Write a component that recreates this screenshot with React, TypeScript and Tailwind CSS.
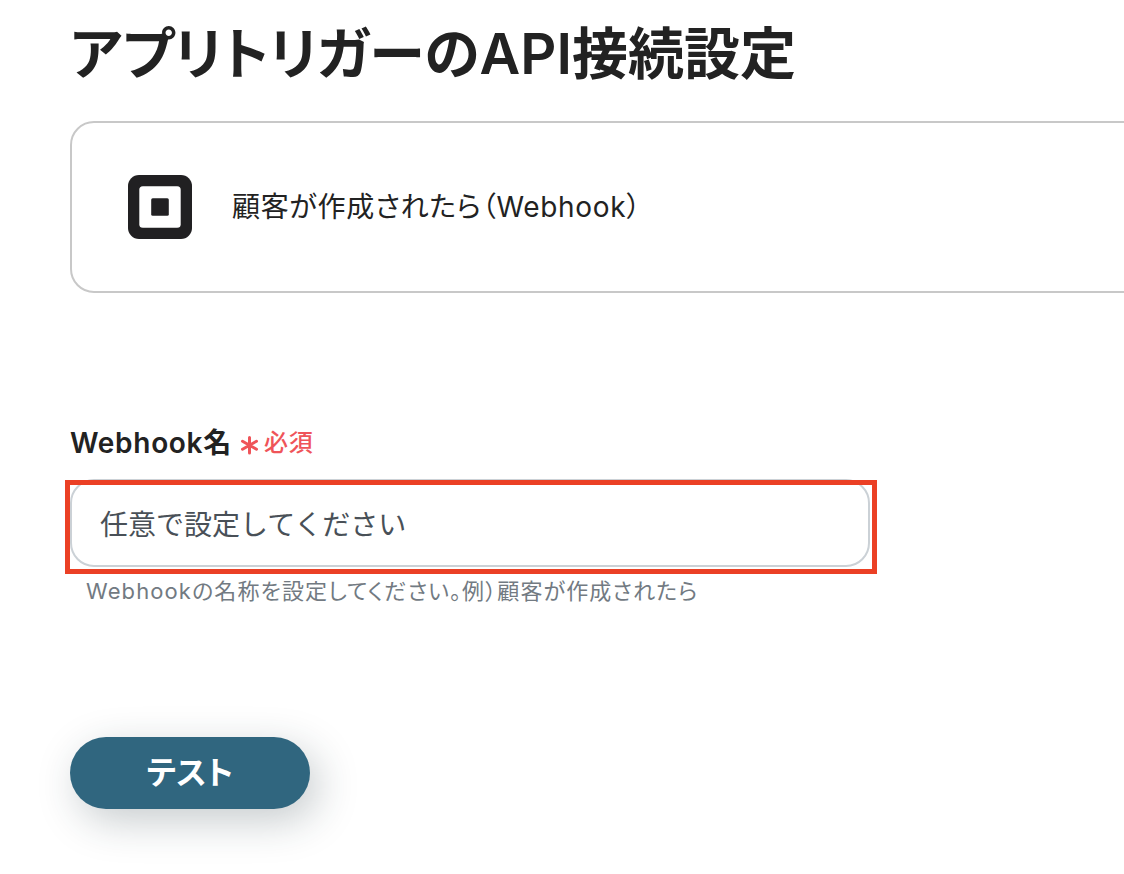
import { useState } from "react";

function AppLogo() {
  return (
    <svg className="h-16 w-16 shrink-0" viewBox="0 0 64 64" aria-hidden="true">
      <rect width="64" height="64" rx="11" fill="#212022" />
      <rect x="11.3" y="11.3" width="41.4" height="41.4" rx="3.5" fill="#fff" />
      <rect x="23.2" y="23.2" width="17.6" height="17.6" rx="1.5" fill="#212022" />
    </svg>
  );
}

function RequiredMark() {
  return (
    <svg className="mt-1 h-5 w-5" viewBox="0 0 20 20" fill="none" stroke="#ef5459" strokeWidth="3" strokeLinecap="round" aria-hidden="true">
      <path d="M9.5 2.5v15.5M2.5 6.2l14 8M16.5 6.2l-14 8" />
    </svg>
  );
}

export default function App() {
  const [name, setName] = useState("");

  return (
    <main className="overflow-hidden bg-white pb-16 pl-[70px] font-['Inter','Noto_Sans_CJK_JP',sans-serif] text-[#222222] [font-feature-settings:'palt']">
      <h1 className="pt-[14px] text-[56px] leading-20 font-semibold whitespace-nowrap">アプリトリガーのAPI接続設定</h1>

      <section className="mt-[27px] -mr-8 flex h-[172px] items-center gap-10 rounded-3xl border-2 border-[#c8c8c8] pl-14">
        <AppLogo />
        <p className="text-[28px] leading-10 tracking-wide whitespace-nowrap">顧客が作成されたら（Webhook）</p>
      </section>

      <form className="mt-[130px]" onSubmit={(e) => e.preventDefault()}>
        <label htmlFor="webhook-name" className="flex items-center gap-2 text-[28px] leading-10 font-semibold tracking-wide">
          Webhook名
          <span className="flex items-center gap-1 text-2xl font-medium text-[#ef5459]">
            <RequiredMark />
            必須
          </span>
        </label>
        <div className="relative mt-4 max-w-[800px]">
          <input
            id="webhook-name"
            value={name}
            onChange={(e) => setName(e.target.value)}
            placeholder="任意で設定してください"
            className="block h-[88px] w-full rounded-3xl border-2 border-[#cbd1d6] px-7 pt-1 text-[28px] outline-none [font-feature-settings:normal] placeholder:text-[#495057]"
          />
          {/* highlight frame over the field */}
          <div className="pointer-events-none absolute top-px -right-[7px] -bottom-[7px] -left-[5px] border-5 border-[#eb4025]" />
        </div>
        <p className="mt-2 pl-4 text-[22px] leading-8 tracking-wider text-[#727a82]">
          Webhookの名称を設定してください。例）顧客が作成されたら
        </p>
        <button type="submit" className="mt-[130px] h-[72px] w-60 rounded-full bg-[#30667f] text-[32px] font-semibold text-white shadow-[8px_12px_40px_rgba(33,50,60,0.25)]">
          テスト
        </button>
      </form>
    </main>
  );
}
